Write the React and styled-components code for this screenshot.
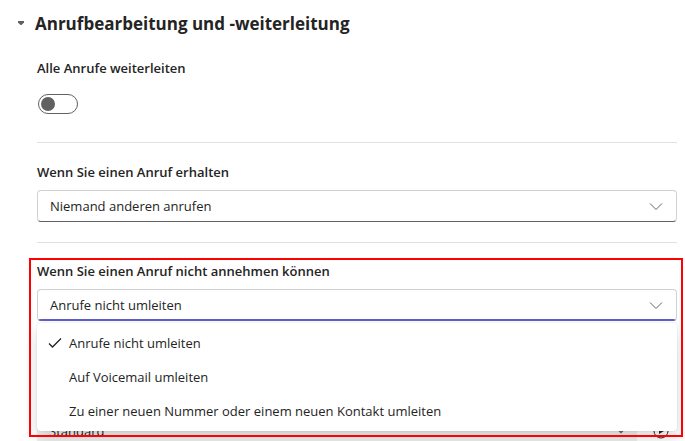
import React, { useState } from "react";
import styled, { createGlobalStyle } from "styled-components";

const GlobalStyle = createGlobalStyle`
  * { box-sizing: border-box; }
  body {
    margin: 0;
    background: #fff;
    color: #242424;
    font-family: "Segoe UI", "Open Sans", "Noto Sans", sans-serif;
    font-size: 13px;
    line-height: 20px;
  }
  button, input, select { font: inherit; color: inherit; }
`;

const Page = styled.main`
  height: 100vh;
  overflow: hidden;
  padding: 12px 8px 0 16px;
`;

const SectionHeader = styled.h2`
  margin: 0 0 22px;
  font-size: 17px;
  line-height: 24px;
  font-weight: 700;
`;

const Disclosure = styled.button`
  display: flex;
  align-items: center;
  gap: 9px;
  padding: 0;
  border: 0;
  background: none;
  font-weight: inherit;
  text-align: left;
  cursor: pointer;
`;

const Content = styled.div`
  padding-left: 21px;
`;

const Label = styled.label`
  display: block;
  width: fit-content;
  margin-bottom: ${(p) => (p.$spacious ? "16px" : "8px")};
  font-weight: 600;
`;

const Divider = styled.hr`
  height: 1px;
  margin: 20px 0 19px;
  border: 0;
  background: #e0e0e0;
`;

const Switch = styled.input`
  appearance: none;
  display: flex;
  align-items: center;
  width: 40px;
  height: 20px;
  margin: 0 0 28px 1px;
  padding: 0 2px;
  border: 1px solid #616161;
  border-radius: 10px;
  cursor: pointer;

  &::before {
    content: "";
    width: 14px;
    height: 14px;
    border-radius: 50%;
    background: #616161;
  }
  &:checked { justify-content: flex-end; }
`;

const SelectWrap = styled.div`
  position: relative;
  height: 32px;
  border: 1px solid #d1d1d1;
  border-bottom-color: #616161;
  border-radius: 4px;
  overflow: hidden;

  &::after {
    content: "";
    position: absolute;
    inset: auto 0 0;
    height: 1px;
    background: ${(p) => (p.$active ? "#5b5fc7" : "transparent")};
  }
  ${(p) => p.$active && "border-bottom-color: #5b5fc7;"}
`;

const Select = styled.select`
  appearance: none;
  display: block;
  width: 100%;
  height: 30px;
  padding: 0 40px 0 12px;
  border: 0;
  outline: 0;
  background: transparent;
`;

const SelectArrow = styled.svg`
  position: absolute;
  right: 13px;
  top: 8px;
  width: 14px;
  height: 14px;
  fill: none;
  stroke: #616161;
  pointer-events: none;
`;

const Highlighted = styled.section`
  position: relative;
  margin-top: -1px;
`;

const Frame = styled.div`
  position: absolute;
  z-index: 3;
  inset: -3px -6px auto -8px;
  height: 179px;
  border: 2px solid #f00;
  pointer-events: none;
`;

const Menu = styled.ul`
  position: absolute;
  z-index: 2;
  top: calc(100% + 2px);
  left: 0;
  right: 0;
  margin: 0;
  padding: 4px;
  list-style: none;
  border-radius: 4px;
  background: #fff;
  box-shadow: 0 0 2px rgba(0, 0, 0, 0.12), 0 8px 16px rgba(0, 0, 0, 0.14);
`;

const MenuItem = styled.li`
  & + & { margin-top: 2px; }
`;

const MenuOption = styled.button`
  display: grid;
  grid-template-columns: 16px 1fr;
  align-items: center;
  gap: 6px;
  width: 100%;
  height: 32px;
  padding: 0 6px;
  border: 0;
  border-radius: 4px;
  background: none;
  text-align: left;
  cursor: pointer;
`;

const CheckIcon = styled.svg`
  width: 16px;
  height: 16px;
  fill: none;
  stroke: #242424;
  stroke-width: 1.3;
  visibility: ${(p) => (p.$visible ? "visible" : "hidden")};
`;

const RingtoneRow = styled.div`
  display: flex;
  align-items: center;
  gap: 16px;
  margin-top: 94px;
  padding-right: 8px;
`;

const RingtoneField = styled.div`
  position: relative;
  flex: 1;
  border-radius: 4px;
  background: #f0f0f0;
`;

const RingtoneSelect = styled(Select)`
  height: 32px;
`;

const SmallArrow = styled(SelectArrow)`
  right: 11px;
  top: 10px;
  width: 10px;
`;

const PlayButton = styled.button`
  display: flex;
  padding: 0;
  border: 0;
  background: none;
`;

const choices = [
  "Anrufe nicht umleiten",
  "Auf Voicemail umleiten",
  "Zu einer neuen Nummer oder einem neuen Kontakt umleiten",
];

function Chevron() {
  return (
    <SelectArrow viewBox="0 0 14 14" aria-hidden="true">
      <path d="M1 4.5 L7 10.5 L13 4.5" />
    </SelectArrow>
  );
}

export default function App() {
  const [choice, setChoice] = useState(choices[0]);
  return (
    <>
      <GlobalStyle />
      <Page>
        <SectionHeader>
          <Disclosure aria-expanded="true">
            <svg width="10" height="10" viewBox="0 0 10 10" aria-hidden="true">
              <path d="M2 2 H8 V3.5 L5.5 6 H4.5 L2 3.5 Z" fill="#616161" />
            </svg>
            Anrufbearbeitung und -weiterleitung
          </Disclosure>
        </SectionHeader>
        <Content>
          <Label htmlFor="forward-all" $spacious>Alle Anrufe weiterleiten</Label>
          <Switch id="forward-all" type="checkbox" role="switch" />
          <Divider />
          <Label htmlFor="incoming">Wenn Sie einen Anruf erhalten</Label>
          <SelectWrap>
            <Select id="incoming">
              <option>Niemand anderen anrufen</option>
            </Select>
            <Chevron />
          </SelectWrap>
          <Divider />
          <Highlighted>
            <Label htmlFor="unanswered">Wenn Sie einen Anruf nicht annehmen können</Label>
            <SelectWrap $active>
              <Select id="unanswered" value={choice} onChange={(e) => setChoice(e.target.value)}>
                {choices.map((c) => <option key={c}>{c}</option>)}
              </Select>
              <Chevron />
            </SelectWrap>
            <Menu role="listbox" aria-label="Wenn Sie einen Anruf nicht annehmen können">
              {choices.map((c) => (
                <MenuItem key={c} role="presentation">
                  <MenuOption role="option" aria-selected={c === choice} onClick={() => setChoice(c)}>
                    <CheckIcon viewBox="0 0 16 16" $visible={c === choice} aria-hidden="true">
                      <path d="M2 8.5 L5.5 12 L14 3.5" />
                    </CheckIcon>
                    {c}
                  </MenuOption>
                </MenuItem>
              ))}
            </Menu>
            <Frame />
          </Highlighted>
          <RingtoneRow>
            <RingtoneField>
              <RingtoneSelect aria-label="Klingelton">
                <option>Standard</option>
              </RingtoneSelect>
              <SmallArrow viewBox="0 0 10 14" aria-hidden="true">
                <path d="M2 4.5 L5 7.5 L8 4.5" strokeWidth="1.4" />
              </SmallArrow>
            </RingtoneField>
            <PlayButton aria-label="Klingelton abspielen">
              <svg width="16" height="16" viewBox="0 0 16 16" aria-hidden="true">
                <circle cx="8" cy="8" r="7" fill="none" stroke="#242424" />
                <path d="M6 5 L11 8 L6 11 Z" fill="#242424" />
              </svg>
            </PlayButton>
          </RingtoneRow>
        </Content>
      </Page>
    </>
  );
}
